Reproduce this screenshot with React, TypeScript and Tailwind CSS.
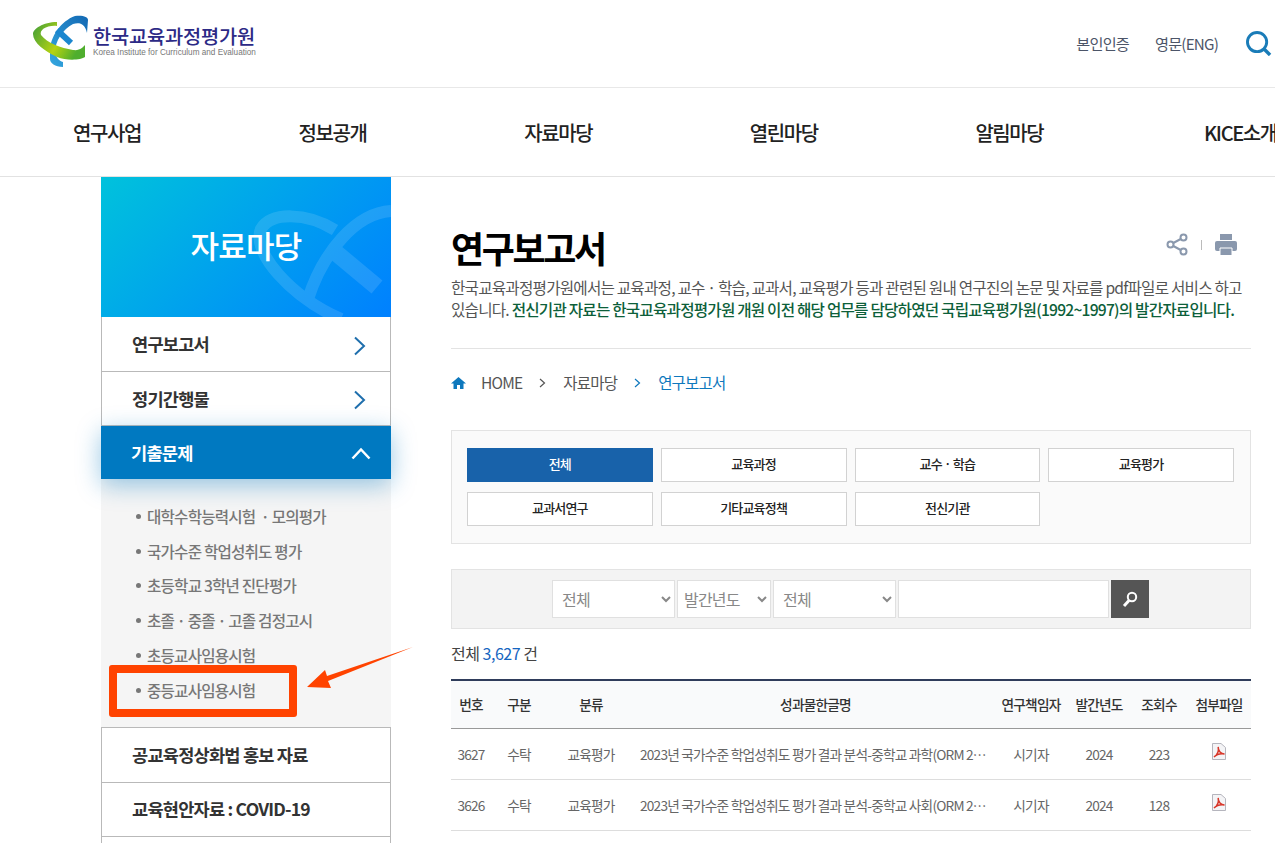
import { useId } from "react";

const navItems = ["연구사업", "정보공개", "자료마당", "열린마당", "알림마당", "KICE소개"];
const subItems = [
  "대학수학능력시험  · 모의평가",
  "국가수준 학업성취도 평가",
  "초등학교 3학년 진단평가",
  "초졸 · 중졸 · 고졸 검정고시",
  "초등교사임용시험",
  "중등교사임용시험",
];
const rowOne = ["전체", "교육과정", "교수 · 학습", "교육평가", "교과서연구", "기타교육정책", "전신기관"];
const rows = [
  { no: 3627, title: "2023년 국가수준 학업성취도 평가 결과 분석-중학교 과학(ORM 2023-45)", views: 223 },
  { no: 3626, title: "2023년 국가수준 학업성취도 평가 결과 분석-중학교 사회(ORM 2023-44)", views: 128 },
];

const Logo = () => {
  const id = useId();
  return (
    <svg width="58" height="54" viewBox="0 0 58 54" className="shrink-0">
      <defs>
        <linearGradient id={`${id}g`} x1="0" y1="0" x2="1" y2="0.4">
          <stop offset="0" stopColor="#3d9c3a" />
          <stop offset="0.6" stopColor="#b6d312" />
          <stop offset="1" stopColor="#4fae2e" />
        </linearGradient>
        <linearGradient id={`${id}b`} x1="0" y1="1" x2="1" y2="0">
          <stop offset="0" stopColor="#35a8e0" />
          <stop offset="1" stopColor="#1268b3" />
        </linearGradient>
      </defs>
      <path d="M42 1 C50 0 55 2 55 5 L54 18 C52 8 46 7 40 9 C30 14 22 26 22 38 C23 42 26 46 30 47 L30 52 C22 52 17 48 17 44 L17 36 C17 22 28 6 42 1 Z" fill={`url(#${id}b)`} />
      <path d="M24 15 L38 28" stroke="#1b87cf" strokeWidth="6" fill="none" />
      <path d="M24 7 C10 7 0 14 0 19 C0 28 12 36 24 42 C34 46 48 45 52 42 L52 30 C50 32 47 36 40 35 C28 33 14 28 8 20 C6 15 14 10 24 11 Z" fill={`url(#${id}g)`} />
    </svg>
  );
};

const ChevronRight = () => (
  <svg width="13" height="20" viewBox="0 0 13 20" fill="none" stroke="#1f6fad" strokeWidth="2" className="mt-[3px]">
    <path d="M2 1.5 L11 10 L2 18.5" />
  </svg>
);

const PdfIcon = () => (
  <svg width="16" height="17" viewBox="0 0 16 17" className="mx-auto -mt-[6px]">
    <path d="M1.5 .5 H10 L14.5 4.5 V16.5 H1.5 Z" fill="#f4f4f6" stroke="#b5b5bd" />
    <path d="M3 14 C6 12 8 8 7.2 4 C7 8 10 11 13.5 11 C10 10.5 6 11 3 14 Z" fill="none" stroke="#d8372a" strokeWidth="1.5" />
  </svg>
);

export default function App() {
  return (
    <div className="relative h-[843px] w-[1275px] overflow-hidden bg-white font-['Noto_Sans_CJK_KR','Noto_Sans',sans-serif] tracking-[-0.05em]">
      <header className="flex h-[88px] items-center justify-between border-b border-[#e8e8e8] pl-[33px] pr-[3px]">
        <div className="flex items-center gap-[2px] pb-[4px]">
          <Logo />
          <div className="flex flex-col pt-[1px]">
            <span className="text-[19.8px] leading-[22px] font-medium tracking-[-0.01em] whitespace-nowrap text-[#2c2a86]">한국교육과정평가원</span>
            <span className="font-['Liberation_Sans',sans-serif] text-[8.2px] leading-[12px] tracking-normal whitespace-nowrap text-[#777]">
              Korea Institute for Curriculum and Evaluation
            </span>
          </div>
        </div>
        <div className="flex items-center text-[15.2px] text-[#4c5568]">
          <span>본인인증</span>
          <span className="ml-[26px]">영문(ENG)</span>
          <svg width="26" height="25" viewBox="0 0 27 26" fill="none" stroke="#1a7cb8" className="ml-[28px]">
            <circle cx="11.5" cy="11.5" r="10" strokeWidth="3" />
            <path d="M19 19 L25 25" strokeWidth="3.5" />
          </svg>
        </div>
      </header>

      <nav className="flex h-[89px] items-center gap-[157.6px] border-b border-[#e2e2e2] pt-[2px] pl-[73px] text-[20px] font-medium tracking-[-0.07em] whitespace-nowrap text-[#222]">
        {navItems.map((item, i) => (
          <span key={item} className={i === 5 ? "ml-[3px]" : ""}>
            {item}
          </span>
        ))}
      </nav>

      <div className="flex items-start pl-[101px]">
        <aside className="w-[290px] shrink-0">
          <div className="relative flex h-[140px] items-center justify-center overflow-hidden bg-[linear-gradient(135deg,#00c2dc,#0080ff)]">
            <svg width="290" height="140" viewBox="0 0 290 140" fill="none" stroke="#fff" className="absolute inset-0 opacity-[0.12]">
              <path d="M290 34 C255 36 222 75 207 122" strokeWidth="12" />
              <path d="M234 75 L276 110" strokeWidth="17" />
              <path d="M234 53 C205 35 170 35 160 52 C150 75 190 120 240 142" strokeWidth="12" />
            </svg>
            <span className="relative pb-[4px] text-[31px] font-medium text-white">자료마당</span>
          </div>

          {["연구보고서", "정기간행물"].map((label) => (
            <div key={label} className="flex h-[54.5px] items-center justify-between border-x border-b border-[#b9b9b9] pt-[1px] pr-[24px] pl-[30px] text-[17.6px] font-bold text-[#333]">
              <span>{label}</span>
              <ChevronRight />
            </div>
          ))}

          <div className="relative flex h-[53px] items-center justify-between bg-[#0079c1] pt-[1px] pr-[20px] pl-[30px] text-[17.6px] font-bold text-white shadow-[0_6px_24px_rgba(0,121,193,0.4)]">
            <span>기출문제</span>
            <svg width="20" height="13" viewBox="0 0 20 13" fill="none" stroke="#fff" strokeWidth="2.5">
              <path d="M1.5 11.5 L10 2.5 L18.5 11.5" />
            </svg>
          </div>

          <ul className="flex h-[248px] flex-col bg-[#f5f5f5] pt-[20px] pl-[35px] text-[15.6px] font-medium text-[#777]">
            {subItems.map((item) => (
              <li key={item} className="flex h-[34.8px] items-center gap-[6px] whitespace-pre">
                <span className="size-[5px] rounded-full bg-[#777]" />
                {item}
              </li>
            ))}
          </ul>

          {["공교육정상화법 홍보 자료", "교육현안자료 : COVID-19", ""].map((label, i) => (
            <div key={i} className="flex h-[54.5px] items-center border-x border-t border-[#b9b9b9] pl-[30px] text-[17.6px] font-bold text-[#333]">
              {label}
            </div>
          ))}
        </aside>

        <main className="ml-[60px] w-[800px] shrink-0">
          <div className="flex items-start justify-between pt-[47px]">
            <h1 className="text-[36px] leading-[46px] font-bold tracking-[-0.065em] text-black">연구보고서</h1>
            <div className="flex items-center pt-[9px] pr-[14px]">
              <svg width="22" height="23" viewBox="0 0 22 23" fill="none" stroke="#8a98ad" strokeWidth="2">
                <circle cx="17.5" cy="4.5" r="3" />
                <circle cx="4.5" cy="11.5" r="3" />
                <circle cx="17.5" cy="18.5" r="3" />
                <path d="M7.3 10 L14.7 6 M7.3 13 L14.7 17" />
              </svg>
              <span className="ml-[13px] mr-[13px] h-[10px] w-px bg-[#bbb]" />
              <svg width="22" height="22" viewBox="0 0 22 22" fill="#8a98ad">
                <path d="M5 0 H17 V6 H5 Z" />
                <rect x="0" y="7" width="22" height="10" rx="2" />
                <path d="M5 14 H17 V21.500 H5 Z" stroke="#fff" strokeWidth="1" />
              </svg>
            </div>
          </div>
          <p className="mt-[7px] h-[71px] text-[15.65px] leading-[22px] text-[#555]">
            한국교육과정평가원에서는 교육과정, 교수 · 학습, 교과서, 교육평가 등과 관련된 원내 연구진의 논문 및 자료를 pdf파일로 서비스 하고 있습니다.{" "}
            <span className="font-medium text-[#0d5f3a]">전신기관 자료는 한국교육과정평가원 개원 이전 해당 업무를 담당하였던 국립교육평가원(1992~1997)의 발간자료입니다.</span>
          </p>
          <div className="border-t border-[#e3e3e3]" />

          <div className="mt-[23px] flex h-[22px] items-center text-[15.5px] text-[#555]">
            <svg width="15" height="12" viewBox="0 0 15 12" fill="#0e78bd" className="mr-[15px]">
              <path d="M7.500 0 L15 6.500 H12.500 V12 H9 V8 H6 V12 H2.500 V6.500 H0 Z" />
            </svg>
            <span>HOME</span>
            <svg width="7" height="10" viewBox="0 0 7 10" fill="none" stroke="#555" strokeWidth="1.2" className="mx-[17px]">
              <path d="M1 1 L5.500 5 L1 9" />
            </svg>
            <span>자료마당</span>
            <svg width="7" height="10" viewBox="0 0 7 10" fill="none" stroke="#0e78bd" strokeWidth="1.2" className="mx-[17px]">
              <path d="M1 1 L5.500 5 L1 9" />
            </svg>
            <span className="text-[#0e78bd]">연구보고서</span>
          </div>

          <div className="mt-[36px] grid h-[114px] grid-cols-4 content-start gap-x-[8px] gap-y-[10px] border border-[#e3e3e3] bg-[#fafafa] pt-[17px] pr-[16px] pl-[15px]">
            {rowOne.map((label, i) => (
              <button
                key={label}
                className={`h-[34px] border pb-[2px] text-[13px] font-medium ${i === 0 ? "border-[#1862aa] bg-[#1862aa] text-white" : "border-[#d2d2d2] bg-white text-[#222]"}`}
              >
                {label}
              </button>
            ))}
          </div>

          <div className="mt-[25px] flex h-[60px] items-center gap-[2px] border border-[#e3e3e3] bg-[#f3f3f3] pl-[100px]">
            <select className="h-[38px] w-[123px] border border-[#e0e0e0] bg-white pl-[5px] text-[16px] text-[#888]">
              <option>전체</option>
            </select>
            <select className="h-[38px] w-[94px] border border-[#e0e0e0] bg-white pl-[2px] text-[16px] text-[#888]">
              <option>발간년도</option>
            </select>
            <select className="h-[38px] w-[123px] border border-[#e0e0e0] bg-white pl-[5px] text-[16px] text-[#888]">
              <option>전체</option>
            </select>
            <input className="h-[38px] w-[211px] border border-[#e0e0e0] bg-white" />
            <button className="flex size-[38px] items-center justify-center bg-[#555]">
              <svg width="16" height="17" viewBox="0 0 16 17" fill="none" stroke="#fff">
                <circle cx="10" cy="6" r="4.200" strokeWidth="2" />
                <path d="M7 9.500 L2 15" strokeWidth="3" />
              </svg>
            </button>
          </div>

          <p className="mt-[13px] h-[22px] text-[16px] leading-[22px] tracking-[-0.03em] text-[#444]">
            전체 <span className="text-[#1565c0]">3,627</span> 건
          </p>

          <table className="mt-[15px] w-full table-fixed border-t-2 border-[#2f3c5b] text-center text-[13.7px]">
            <thead className="bg-[#f9fafb] font-medium text-[#333]">
              <tr className="h-[48px] border-b border-[#999]">
                <th className="w-[40px] font-medium">번호</th>
                <th className="w-[56px] font-medium">구분</th>
                <th className="w-[88px] font-medium">분류</th>
                <th className="w-[356px] pl-[5px] font-medium">성과물한글명</th>
                <th className="w-[80px] font-medium">연구책임자</th>
                <th className="w-[56px] font-medium">발간년도</th>
                <th className="w-[64px] font-medium">조회수</th>
                <th className="w-[60px] pr-[4px] font-medium">첨부파일</th>
              </tr>
            </thead>
            <tbody className="text-[#666]">
              {rows.map((row) => (
                <tr key={row.no} className="h-[51px] border-b border-[#ddd]">
                  <td className="pt-[1px]">{row.no}</td>
                  <td className="pt-[1px]">수탁</td>
                  <td className="pt-[1px]">교육평가</td>
                  <td className="truncate pt-[1px] pr-[3px] pl-[5px] text-left">{row.title}</td>
                  <td className="pt-[1px]">시기자</td>
                  <td className="pt-[1px]">2024</td>
                  <td className="pt-[1px]">{row.views}</td>
                  <td className="pt-[2px] pr-[4px]">
                    <PdfIcon />
                  </td>
                </tr>
              ))}
            </tbody>
          </table>
        </main>
      </div>

      {/* red callout drawn on top of the capture */}
      <div className="absolute top-[665px] left-[109px] h-[52px] w-[188px] rounded-[3px] border-[8px] border-[#ff4300]" />
      <svg width="112" height="48" viewBox="0 0 112 48" className="absolute top-[645px] left-[304px]">
        <path d="M109 2 L24 36 L27 43 L3 42 L21 25 L23 31 Z" fill="#ff4300" />
      </svg>
    </div>
  );
}
